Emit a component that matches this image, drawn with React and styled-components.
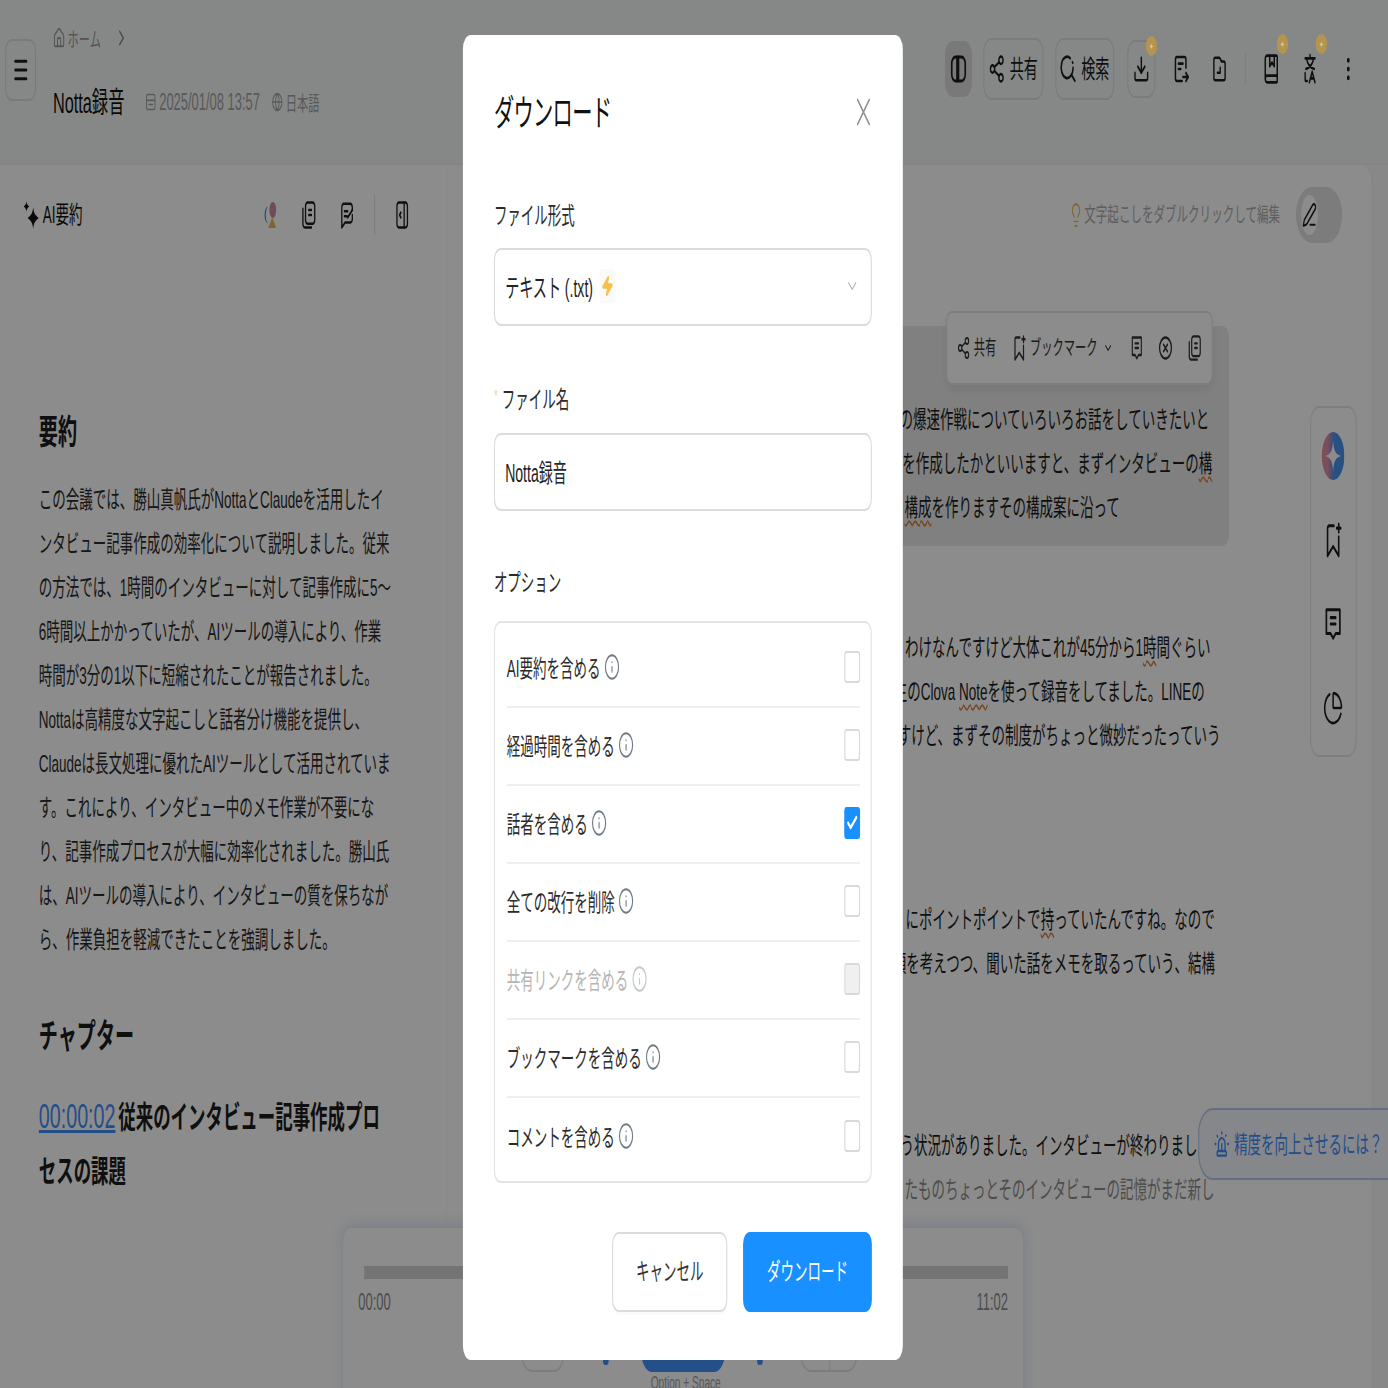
import React from 'react';
import styled, { createGlobalStyle } from 'styled-components';
import {
  Home, ChevronRight, ChevronDown, Globe, Share2, Download, BookMarked,
  EllipsisVertical, PenLine, Lightbulb, ChartPie, Check, Info, Zap, Siren, Menu,
} from 'lucide-react';

// The whole page is a wide layout squeezed horizontally, as in the screenshot.
const SQUEEZE = 0.5625;

const Global = createGlobalStyle`
  html, body {
    margin: 0;
    width: 1388px;
    height: 1388px;
    overflow: hidden;
    background: #fff;
  }
  * { box-sizing: border-box; }
`;

const Stage = styled.div`
  position: relative;
  width: ${1388 / SQUEEZE}px;
  height: 1388px;
  overflow: hidden;
  transform: scaleX(${SQUEEZE});
  transform-origin: left top;
  background: #f7f8f8;
  color: #1c1c1c;
  font-family: "Liberation Sans", "Noto Sans CJK JP", sans-serif;
  font-size: 24px;
`;

/* header */
const Header = styled.header`
  display: flex;
  justify-content: space-between;
  height: 165px;
  background: #f5f8f7;
  border-bottom: 2px solid #f0f0f0;
`;
const HeaderLeft = styled.div`
  display: flex;
  align-items: flex-start;
`;
const MenuButton = styled.div`
  display: flex;
  align-items: center;
  justify-content: center;
  width: 55px;
  height: 62px;
  margin: 39px 0 0 9px;
  border: 2px solid #dedede;
  border-radius: 12px;
`;
const HeaderInfo = styled.div`
  display: flex;
  flex-direction: column;
  margin-left: 30px;
  padding-top: 24px;
`;
const Crumbs = styled.div`
  display: flex;
  align-items: center;
  height: 28px;
  font-size: 20px;
  color: #9a9a9a;
  gap: 4px;
  svg:last-child { margin-left: 20px; color: #8a8a8a; }
`;
const TitleRow = styled.div`
  display: flex;
  align-items: center;
  height: 40px;
  margin-top: 30px;
`;
const RecordTitle = styled.div`
  font-size: 29px;
  width: 164px;
  padding-bottom: 4px;
  white-space: nowrap;
  color: #111;
`;
const Meta = styled.span`
  display: inline-flex;
  align-items: center;
  gap: 5px;
  margin-left: ${(p) => p.$gap}px;
  font-size: ${(p) => p.$size}px;
  color: #a2a2a2;
`;
const Toolbar = styled.div`
  display: flex;
  align-items: center;
  height: 138px;
  padding-right: 51px;
`;
const ToolIcon = styled.div`
  position: relative;
  display: flex;
  align-items: center;
  justify-content: center;
  flex: none;
  gap: 8px;
  height: ${(p) => p.$h || 58}px;
  width: ${(p) => p.$w}px;
  margin-left: ${(p) => p.$ml || 0}px;
  border-radius: 14px;
  border: ${(p) => (p.$outline ? '2px solid #e0e0e0' : 'none')};
  background: ${(p) => (p.$active ? '#dcdcdc' : 'transparent')};
  font-size: 25px;
`;
const ToolLabel = styled.span`
  padding-bottom: 4px;
`;
const Badge = styled.span`
  position: absolute;
  z-index: 1;
  top: -6px;
  right: ${(p) => p.$right}px;
  display: flex;
  align-items: center;
  justify-content: center;
  width: 20px;
  height: 20px;
  border-radius: 50%;
  background: #b4944e;
  color: #d8c89a;
  font-size: 10px;
`;
const ToolDivider = styled.div`
  width: 2px;
  height: 32px;
  margin-left: ${(p) => p.$ml}px;
  background: #e4e4e4;
`;

/* main columns */
const Columns = styled.div`
  display: flex;
  height: 1223px;
`;
const SummaryPanel = styled.aside`
  flex: none;
  width: 795px;
  background: #fff;
  border-right: 1px solid #f3f3f3;
`;
const PanelHead = styled.div`
  display: flex;
  align-items: center;
  height: 100px;
  padding-left: 42px;
`;
const PanelTitle = styled.div`
  display: flex;
  align-items: center;
  gap: 6px;
  width: 150px;
  font-size: 24px;
  color: #111;
  span { padding-bottom: 5px; }
`;
const PanelActions = styled.div`
  display: flex;
  align-items: center;
  margin-left: 268px;
`;
const PanelAction = styled.div`
  display: flex;
  justify-content: center;
  width: 40px;
  margin-right: ${(p) => p.$mr || 0}px;
`;
const ActionDivider = styled.div`
  width: 2px;
  height: 40px;
  margin-right: 28px;
  background: #e4e4e4;
`;
const SummaryBody = styled.div`
  padding: 0 0 0 69px;
`;
const Heading = styled.h2`
  margin: ${(p) => p.$mt}px 0 0;
  font-size: 34px;
  line-height: 48px;
  font-weight: 700;
  color: #1c1c1c;
`;
const SummaryText = styled.div`
  margin-top: 22px;
  font-size: 24px;
  line-height: 44px;
  white-space: nowrap;
  color: #2b2b2b;
`;
const Chapter = styled.div`
  margin-top: 29px;
  font-size: 31px;
  line-height: 54px;
  font-weight: 700;
  white-space: nowrap;
`;
const TimeLink = styled.a`
  margin-right: 5px;
  font-size: 35px;
  font-weight: 400;
  color: #3f8efc;
  text-decoration: underline;
`;

const TranscriptPanel = styled.main`
  position: relative;
  flex: 1;
  margin-right: 27px;
  background: #fff;
  border-right: 2px solid #f0f0f0;
  border-radius: 0 20px 0 0;
`;
const TranscriptHead = styled.div`
  display: flex;
  align-items: center;
  justify-content: flex-end;
  height: 100px;
  padding-right: 53px;
`;
const Tip = styled.div`
  display: flex;
  align-items: center;
  gap: 2px;
  font-size: 20.5px;
  color: #aeaeae;
  svg { color: #e8b94c; }
  span { padding-bottom: 4px; }
`;
const EditToggle = styled.div`
  display: flex;
  align-items: center;
  width: 82px;
  height: 56px;
  margin-left: 28px;
  padding-left: 9px;
  border-radius: 28px;
  background: #e2e2e2;
`;
const EditKnob = styled.div`
  display: flex;
  align-items: center;
  justify-content: center;
  width: 30px;
  height: 40px;
  border-radius: 50%;
  background: #fff;
`;
const Transcript = styled.div`
  padding-left: 400px;
`;
const Segment = styled.div`
  position: relative;
  width: 990px;
  margin-top: ${(p) => p.$mt}px;
  padding: ${(p) => (p.$active ? '72px 0 16px 389px' : '0 0 0 389px')};
  border-radius: 12px;
  background: ${(p) => (p.$active ? '#e9e9e9' : 'transparent')};
  font-size: 24px;
  line-height: 44px;
  white-space: nowrap;
`;
const TextLine = styled.div`
  margin-left: ${(p) => p.$x || 0}px;
  color: ${(p) => (p.$faded ? '#8e8e8e' : 'inherit')};
`;
const Squiggle = styled.span`
  text-decoration: underline wavy #d9803a;
  text-decoration-thickness: 1.5px;
  text-underline-offset: 4px;
`;
const SegmentBar = styled.div`
  position: absolute;
  top: -15px;
  left: 487px;
  display: flex;
  align-items: center;
  width: 474px;
  height: 74px;
  padding-left: 17px;
  border-radius: 10px;
  border: 2px solid #e6e6e6;
  background: #fff;
  box-shadow: 0 6px 10px rgba(0, 0, 0, 0.05);
  font-size: 20px;
  line-height: 1;
  color: #333;
`;
const BarItem = styled.span`
  display: inline-flex;
  align-items: center;
  gap: 6px;
  margin-right: ${(p) => p.$mr || 0}px;
`;
const SideRail = styled.div`
  position: absolute;
  top: 241px;
  right: 27px;
  display: flex;
  flex-direction: column;
  align-items: center;
  gap: 32px;
  width: 83px;
  height: 351px;
  padding-top: 22px;
  border: 2px solid #e8e8e8;
  border-radius: 16px;
  background: #fff;
`;
const RailIcon = styled.div`
  display: flex;
  align-items: center;
  justify-content: center;
  height: 52px;
`;
const HintPill = styled.div`
  position: absolute;
  top: 943px;
  left: 1335px;
  display: flex;
  align-items: center;
  gap: 8px;
  width: 420px;
  height: 72px;
  padding-left: 26px;
  border: 2px solid #b3cdec;
  border-radius: 26px;
  background: #f2f6fb;
  color: #3f8efc;
  font-size: 24px;
  white-space: nowrap;
  span { padding-bottom: 4px; }
`;

/* player */
const Player = styled.div`
  position: absolute;
  top: 1228px;
  left: 610px;
  width: 1209px;
  height: 200px;
  padding: 38px 27px 0 36px;
  border-radius: 14px;
  background: #fff;
  box-shadow: 0 -4px 16px rgba(120, 160, 220, 0.25);
`;
const ProgressBar = styled.div`
  position: relative;
  height: 13px;
  background: #d3d3d3;
  border-radius: 2px;
`;
const Thumb = styled.span`
  position: absolute;
  top: -6px;
  left: -20px;
  width: 22px;
  height: 25px;
  border-radius: 50%;
  background: #fff;
`;
const TimeRow = styled.div`
  display: flex;
  justify-content: space-between;
  margin: 11px 0 0 -9px;
  font-size: 23px;
  line-height: 24px;
  color: #8c8c8c;
`;
const Controls = styled.div`
  display: flex;
  align-items: flex-end;
  height: 58px;
  padding-left: 280px;
`;
const PlayButton = styled.div`
  width: 149px;
  height: 56px;
  margin-left: ${(p) => p.$ml}px;
  border-radius: 0 0 20px 20px;
  background: #4291f9;
`;
const SideControl = styled.div`
  position: relative;
  width: ${(p) => p.$w}px;
  height: 40px;
  margin-left: ${(p) => p.$ml || 0}px;
  border: 2px solid #e4e4e4;
  border-radius: 0 0 20px 20px;
`;
const SplitLine = styled.span`
  position: absolute;
  top: 0;
  bottom: 0;
  left: 50%;
  width: 2px;
  background: #e4e4e4;
`;
const BlueBit = styled.span`
  width: 10px;
  height: 5px;
  margin: 0 0 7px ${(p) => p.$ml}px;
  background: #4291f9;
  border-radius: 0 0 4px 4px;
`;
const Shortcut = styled.div`
  margin-top: 1px;
  text-align: center;
  font-size: 18px;
  color: #a0a0a0;
`;

/* modal */
const Overlay = styled.div`
  position: absolute;
  inset: 0;
  background: rgba(0, 0, 0, 0.45);
`;
const Modal = styled.div`
  width: 782px;
  height: 1325px;
  margin: 35px 0 0 823px;
  padding: 51px 55px 0;
  border-radius: 14px;
  background: #fff;
  color: #222;
`;
const ModalHead = styled.div`
  display: flex;
  align-items: center;
  justify-content: space-between;
  height: 52px;
  padding-right: 3px;
`;
const ModalTitle = styled.h1`
  margin: 0;
  padding-bottom: 4px;
  font-size: 36px;
  letter-spacing: -1.2px;
  font-weight: 400;
  color: #111;
`;
const FieldLabel = styled.div`
  display: flex;
  height: 36px;
  align-items: center;
  margin-top: ${(p) => p.$mt}px;
  padding-bottom: 4px;
  font-size: 24px;
  color: #2b2b2b;
`;
const Required = styled.span`
  align-self: flex-start;
  margin-right: 7px;
  padding-top: 3px;
  color: #e8d8b0;
  font-size: 18px;
  line-height: 24px;
`;
const Field = styled.div`
  display: flex;
  align-items: center;
  justify-content: space-between;
  height: 78px;
  margin-top: ${(p) => p.$mt}px;
  padding: 0 20px 2px 18px;
  border: 2px solid #dcdcdc;
  border-radius: 12px;
  font-size: 25px;
`;
const FieldValue = styled.span`
  display: inline-flex;
  align-items: center;
  gap: 12px;
`;
const ProMark = styled.span`
  display: inline-flex;
  align-items: center;
  justify-content: center;
  width: 28px;
  height: 34px;
  border-radius: 4px;
  background: #fafafa;
  color: #f7c04a;
`;
const OptionBox = styled.div`
  margin-top: 21px;
  padding: 7px 19px 5px 21px;
  border: 2px solid #e4e4e4;
  border-radius: 12px;
`;
const OptionRow = styled.div`
  display: flex;
  align-items: center;
  justify-content: space-between;
  height: 78px;
  border-bottom: ${(p) => (p.$last ? 'none' : '2px solid #efefef')};
  color: ${(p) => (p.$disabled ? '#b5b5b5' : '#2b2b2b')};
`;
const OptionName = styled.span`
  display: inline-flex;
  align-items: center;
  gap: 6px;
  padding-bottom: 3px;
  svg { color: ${(p) => (p.$disabled ? '#c2c7cc' : '#6f7b86')}; }
`;
const CheckBox = styled.span`
  display: flex;
  align-items: center;
  justify-content: center;
  width: 28px;
  height: 32px;
  margin-bottom: 2px;
  border: 2px solid ${(p) => (p.$checked ? '#1890ff' : '#d9d9d9')};
  border-radius: 4px;
  background: ${(p) => (p.$checked ? '#1890ff' : p.$disabled ? '#f0f0f0' : '#fff')};
  color: #fff;
`;
const ModalFooter = styled.div`
  display: flex;
  justify-content: flex-end;
  gap: 28px;
  margin-top: 49px;
`;
const FooterButton = styled.button`
  width: ${(p) => p.$w}px;
  height: 80px;
  padding: 0 0 6px;
  border: ${(p) => (p.$primary ? 'none' : '2px solid #dcdcdc')};
  border-radius: 12px;
  background: ${(p) => (p.$primary ? '#1890ff' : '#fff')};
  color: ${(p) => (p.$primary ? '#fff' : '#333')};
  font: inherit;
  box-shadow: ${(p) => (p.$primary ? 'none' : '0 3px 0 rgba(0, 0, 0, 0.02)')};
`;

/* drawings without a package icon */
const Line = ({ w = 28, h = 28, children, sw = 2 }) => (
  <svg width={w} height={h} viewBox="0 0 24 24" preserveAspectRatio="none" fill="none" stroke="currentColor" strokeWidth={sw} strokeLinecap="round" strokeLinejoin="round">
    {children}
  </svg>
);
const TwoColumns = () => (
  <Line w={32} h={32} sw={2.2}>
    <rect x="3" y="3" width="18" height="18" rx="5" />
    <path d="M10 3v18M12 3v18" />
  </Line>
);
const DateIcon = () => (
  <Line w={20} h={20}>
    <rect x="3" y="3" width="18" height="18" rx="3" />
    <path d="M3 10h18M8 15h8" />
  </Line>
);
const LoopSearch = () => (
  <Line w={30} h={30} sw={2.2}>
    <path d="M15 3.500A8.500 8.500 0 1 0 19 11" />
    <path d="M17 17l4.500 4.500" />
    <path d="M18 6.500l.5.5" />
  </Line>
);
const FileArrow = () => (
  <Line w={32} h={32}>
    <path d="M19 11V5a2 2 0 0 0-2-2H7a2 2 0 0 0-2 2v14a2 2 0 0 0 2 2h7" />
    <path d="M9 8h6M9 12h3M15 18h7M19 15l3 3-3 3" />
  </Line>
);
const FolderMark = () => (
  <Line w={30} h={30}>
    <path d="M4 5a2 2 0 0 1 2-2h6l3 3h3a2 2 0 0 1 2 2v11a2 2 0 0 1-2 2H6a2 2 0 0 1-2-2z" />
    <path d="M13 11v4H9" />
  </Line>
);
const TranslateMark = () => (
  <Line w={30} h={32}>
    <path d="M5 4h14M12 1.500V4M7 4c1.500 5 5 7 11 8M17 4c-1.500 5-5 7-11 8" />
    <path d="M5 15v5a1 1 0 0 0 1 1h2M11 22l4-8 4 8M12.500 19h5" />
  </Line>
);
const CopyDoc = ({ w = 28, h = 30 }) => (
  <Line w={w} h={h}>
    <rect x="7" y="2" width="14" height="17" rx="3" />
    <path d="M3 7v12a3 3 0 0 0 3 3h10M12 8h4M12 12h4" />
  </Line>
);
const NoteBubble = ({ w = 28, h = 30 }) => (
  <Line w={w} h={h}>
    <path d="M4 3h16v15h-5l-3 3-3-3H4z" />
    <path d="M9 8h6M9 12h6" />
  </Line>
);
const EditBubble = () => (
  <Line h={30}>
    <path d="M20 8V6a3 3 0 0 0-3-3H7a3 3 0 0 0-3 3v16l5-4h8a3 3 0 0 0 3-3v-3" />
    <path d="M8 9h5M8 13h4M13 14l7-6" />
  </Line>
);
const CollapseIcon = () => (
  <Line h={30}>
    <rect x="4" y="2" width="16" height="20" rx="3" />
    <path d="M15 2v20M10 10l-2 2 2 2" />
  </Line>
);
const CancelCircle = () => (
  <Line h={28}>
    <circle cx="12" cy="12" r="9" />
    <path d="M9 9l6 6M15 9l-6 6" />
  </Line>
);
const BookmarkSpark = ({ w, h }) => (
  <Line w={w} h={h}>
    <path d="M13 3H7a2 2 0 0 0-2 2v17l7-6 7 6V10" />
    <path d="M19 2v5M16.500 4.500h5" />
  </Line>
);
const StarBurst = () => (
  <svg width="28" height="28" viewBox="0 0 28 28" fill="#111">
    <path d="M17 6C18 12 20 14 27 17 20 20 18 22 17 28 16 22 14 20 7 17 14 14 16 12 17 6z" />
    <path d="M5 0C5.500 3 6.500 4 10 5.500 6.500 7 5.500 8 5 11 4.500 8 3.500 7 0 5.500 3.500 4 4.500 3 5 0z" />
  </svg>
);
const ColorMark = () => (
  <svg width="28" height="26" viewBox="0 0 28 26">
    <path d="M10 4a10 10 0 0 0 0 18 13 13 0 0 1 0-18z" fill="#3f87e6" />
    <ellipse cx="19" cy="8" rx="6" ry="8" fill="#c98da0" />
    <path d="M18 15l7 11H11z" fill="#eab95a" />
  </svg>
);
const AiBall = () => (
  <svg width="40" height="48" viewBox="0 0 40 48">
    <defs>
      <linearGradient id="ball" x1="0" x2="1" y1="0" y2="0">
        <stop offset="0.25" stopColor="#e08ea4" />
        <stop offset="0.55" stopColor="#4a92ec" />
      </linearGradient>
    </defs>
    <ellipse cx="20" cy="24" rx="20" ry="24" fill="url(#ball)" />
    <path d="M20 8c1 11 4 14 14 16-10 2-13 5-14 16-1-11-4-14-14-16 10-2 13-5 14-16z" fill="#fff" />
  </svg>
);
const CloseX = () => (
  <svg width="24" height="28" viewBox="0 0 24 28" fill="none" stroke="#8a9299" strokeWidth="2.4">
    <path d="M1 1l22 26M23 1L1 27" />
  </svg>
);

const summaryLines = [
  'この会議では、勝山真帆氏がNottaとClaudeを活用したイ',
  'ンタビュー記事作成の効率化について説明しました。従来',
  'の方法では、1時間のインタビューに対して記事作成に5～',
  '6時間以上かかっていたが、AIツールの導入により、作業',
  '時間が3分の1以下に短縮されたことが報告されました。',
  'Nottaは高精度な文字起こしと話者分け機能を提供し、',
  'Claudeは長文処理に優れたAIツールとして活用されていま',
  'す。これにより、インタビュー中のメモ作業が不要にな',
  'り、記事作成プロセスが大幅に効率化されました。勝山氏',
  'は、AIツールの導入により、インタビューの質を保ちなが',
  'ら、作業負担を軽減できたことを強調しました。',
];

const options = [
  { name: 'AI要約を含める' },
  { name: '経過時間を含める' },
  { name: '話者を含める', checked: true },
  { name: '全ての改行を削除' },
  { name: '共有リンクを含める', disabled: true },
  { name: 'ブックマークを含める' },
  { name: 'コメントを含める' },
];

export default function App() {
  return (
    <>
      <Global />
      <Stage>
        <Header>
          <HeaderLeft>
            <MenuButton><Menu size={30} strokeWidth={2.4} /></MenuButton>
            <HeaderInfo>
              <Crumbs>
                <Home size={22} />
                <span>ホーム</span>
                <ChevronRight size={26} />
              </Crumbs>
              <TitleRow>
                <RecordTitle>Notta録音</RecordTitle>
                <Meta $gap={0} $size={23}><DateIcon />2025/01/08 13:57</Meta>
                <Meta $gap={21} $size={20}><Globe size={20} />日本語</Meta>
              </TitleRow>
            </HeaderInfo>
          </HeaderLeft>
          <Toolbar>
            <ToolIcon $w={48} $h={56} $active><TwoColumns /></ToolIcon>
            <ToolIcon $w={107} $h={62} $ml={20} $outline><Share2 size={30} /><ToolLabel>共有</ToolLabel></ToolIcon>
            <ToolIcon $w={105} $h={62} $ml={21} $outline><LoopSearch /><ToolLabel>検索</ToolLabel></ToolIcon>
            <ToolIcon $w={50} $ml={23} $outline><Download size={30} /><Badge $right={-5}>✦</Badge></ToolIcon>
            <ToolIcon $w={40} $ml={25}><FileArrow /></ToolIcon>
            <ToolIcon $w={40} $ml={29}><FolderMark /></ToolIcon>
            <ToolDivider $ml={25} />
            <ToolIcon $w={40} $ml={25}><BookMarked size={32} /><Badge $right={-10}>✦</Badge></ToolIcon>
            <ToolIcon $w={40} $ml={29}><TranslateMark /><Badge $right={-10}>✦</Badge></ToolIcon>
            <ToolIcon $w={40} $ml={28}><EllipsisVertical size={30} /></ToolIcon>
          </Toolbar>
        </Header>
        <Columns>
          <SummaryPanel>
            <PanelHead>
              <PanelTitle><StarBurst /><span>AI要約</span></PanelTitle>
              <PanelActions>
                <PanelAction $mr={29}><ColorMark /></PanelAction>
                <PanelAction $mr={28}><CopyDoc /></PanelAction>
                <PanelAction $mr={28}><EditBubble /></PanelAction>
                <ActionDivider />
                <PanelAction><CollapseIcon /></PanelAction>
              </PanelActions>
            </PanelHead>
            <SummaryBody>
              <Heading $mt={143}>要約</Heading>
              <SummaryText>
                {summaryLines.map((line) => <div key={line}>{line}</div>)}
              </SummaryText>
              <Heading $mt={50}>チャプター</Heading>
              <Chapter>
                <TimeLink>00:00:02</TimeLink>従来のインタビュー記事作成プロ<br />セスの課題
              </Chapter>
            </SummaryBody>
          </SummaryPanel>
          <TranscriptPanel>
            <TranscriptHead>
              <Tip><Lightbulb size={26} strokeWidth={1.6} /><span>文字起こしをダブルクリックして編集</span></Tip>
              <EditToggle><EditKnob><PenLine size={26} /></EditKnob></EditToggle>
            </TranscriptHead>
            <Transcript>
              <Segment $active $mt={61}>
                <SegmentBar>
                  <BarItem $mr={28}><Share2 size={24} />共有</BarItem>
                  <BarItem $mr={10}><BookmarkSpark w={26} h={28} />ブックマーク</BarItem>
                  <BarItem $mr={30}><ChevronDown size={18} /></BarItem>
                  <BarItem $mr={25}><NoteBubble w={24} h={28} /></BarItem>
                  <BarItem $mr={25}><CancelCircle /></BarItem>
                  <BarItem><CopyDoc w={26} h={28} /></BarItem>
                </SegmentBar>
                <TextLine $x={-9}>　の爆速作戦についていろいろお話をしていきたいと</TextLine>
                <TextLine $x={-4}>　を作成したかといいますと、まずインタビューの<Squiggle>構</Squiggle></TextLine>
                <TextLine>　<Squiggle>構成</Squiggle>を作りますその構成案に沿って</TextLine>
              </Segment>
              <Segment $mt={80}>
                <TextLine $x={1}>　わけなんですけど大体これが45分から1<Squiggle>時</Squiggle>間ぐらい</TextLine>
                <TextLine $x={5}>生のClova <Squiggle>Note</Squiggle>を使って録音をしてました。LINEの</TextLine>
                <TextLine $x={-12}>ますけど、まずその制度がちょっと微妙だったっていう</TextLine>
              </Segment>
              <Segment $mt={140}>
                <TextLine $x={2}>　にポイントポイントで<Squiggle>持</Squiggle>っていたんですね。なので</TextLine>
                <TextLine $x={3}>順を考えつつ、聞いた話をメモを取るっていう、結構</TextLine>
              </Segment>
              <Segment $mt={138}>
                <TextLine $x={-7}>いう状況がありました。インタビューが終わりまし</TextLine>
                <TextLine $faded>　たものちょっとそのインタビューの記憶がまだ新し</TextLine>
              </Segment>
            </Transcript>
            <SideRail>
              <RailIcon><AiBall /></RailIcon>
              <RailIcon><BookmarkSpark w={34} h={38} /></RailIcon>
              <RailIcon><NoteBubble w={36} h={38} /></RailIcon>
              <RailIcon><ChartPie size={36} strokeWidth={1.8} /></RailIcon>
            </SideRail>
            <HintPill><Siren size={28} /><span>精度を向上させるには？</span></HintPill>
          </TranscriptPanel>
        </Columns>
        <Player>
          <ProgressBar><Thumb /></ProgressBar>
          <TimeRow><span>00:00</span><span>11:02</span></TimeRow>
          <Controls>
            <SideControl $w={78} />
            <BlueBit $ml={68} />
            <PlayButton $ml={58} />
            <BlueBit $ml={57} />
            <SideControl $w={103} $ml={66}><SplitLine /></SideControl>
          </Controls>
          <Shortcut>Option + Space</Shortcut>
        </Player>
        <Overlay>
          <Modal>
            <ModalHead>
              <ModalTitle>ダウンロード</ModalTitle>
              <CloseX />
            </ModalHead>
            <FieldLabel $mt={59}>ファイル形式</FieldLabel>
            <Field $mt={15}>
              <FieldValue>テキスト (.txt)<ProMark><Zap size={22} fill="currentColor" /></ProMark></FieldValue>
              <ChevronDown size={26} color="#b0b0b0" strokeWidth={1.5} />
            </Field>
            <FieldLabel $mt={55}><Required>*</Required>ファイル名</FieldLabel>
            <Field $mt={16}><FieldValue>Notta録音</FieldValue></Field>
            <FieldLabel $mt={53}>オプション</FieldLabel>
            <OptionBox>
              {options.map((o, i) => (
                <OptionRow key={o.name} $disabled={o.disabled} $last={i === options.length - 1}>
                  <OptionName $disabled={o.disabled}>{o.name}<Info size={28} strokeWidth={1.7} /></OptionName>
                  <CheckBox $checked={o.checked} $disabled={o.disabled}>
                    {o.checked && <Check size={22} strokeWidth={3.5} />}
                  </CheckBox>
                </OptionRow>
              ))}
            </OptionBox>
            <ModalFooter>
              <FooterButton $w={205}>キャンセル</FooterButton>
              <FooterButton $w={229} $primary>ダウンロード</FooterButton>
            </ModalFooter>
          </Modal>
        </Overlay>
      </Stage>
    </>
  );
}
